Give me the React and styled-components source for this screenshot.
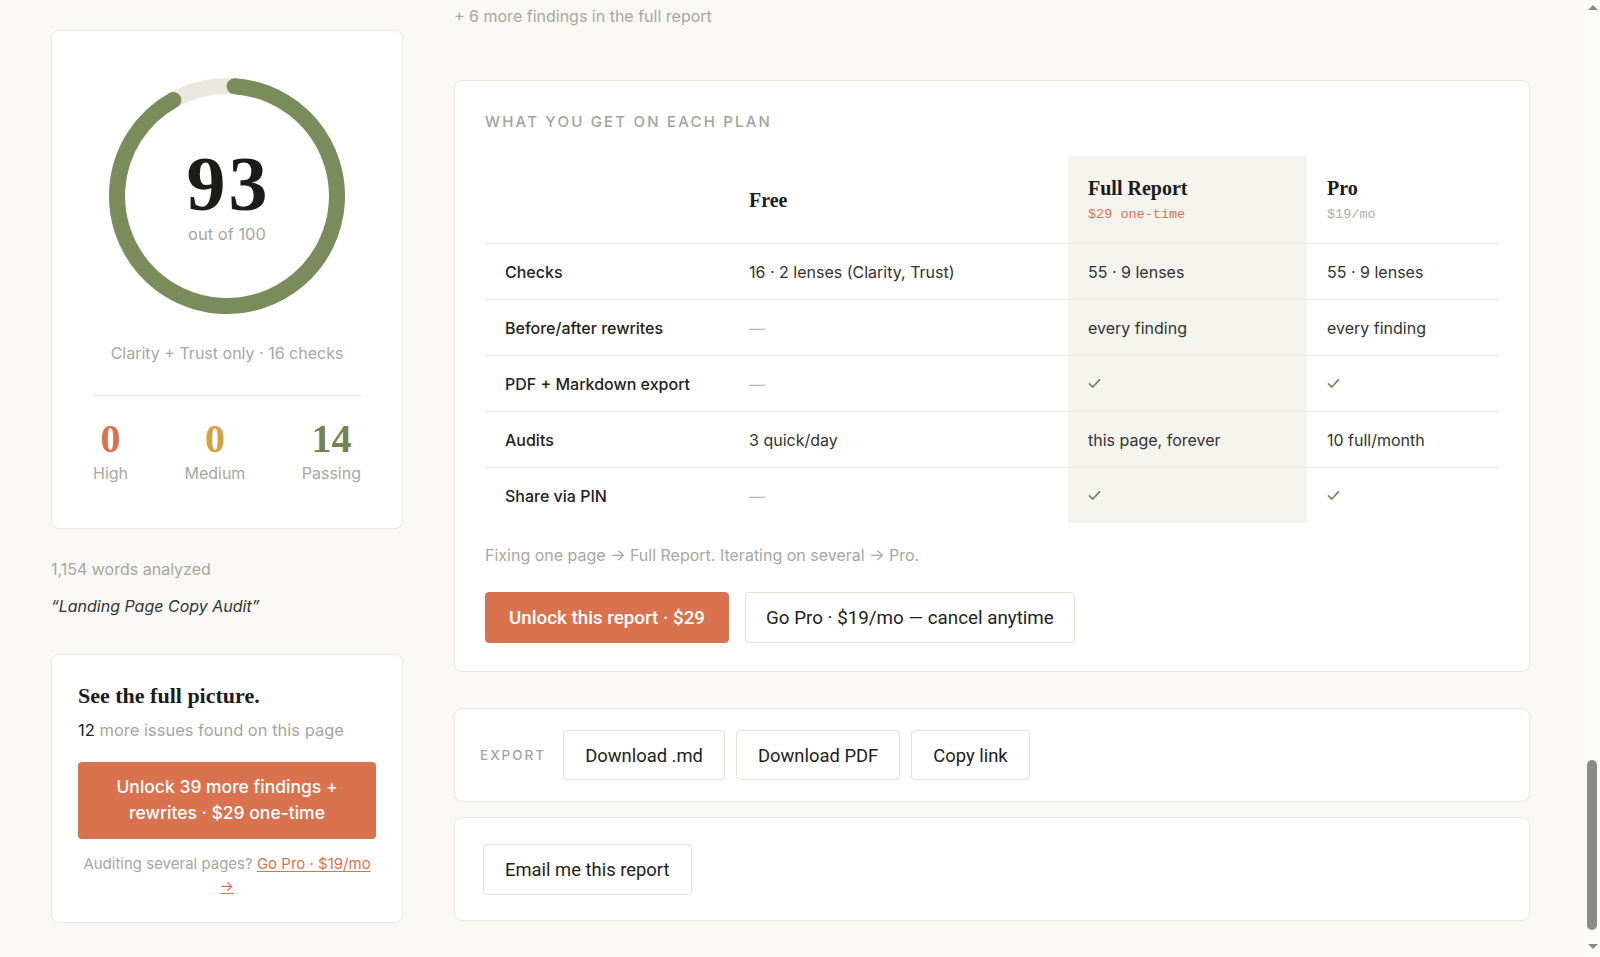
import React from 'react';
import styled, { createGlobalStyle } from 'styled-components';

const GlobalStyle = createGlobalStyle`
    body {
        margin: 0;
        background: #f9f8f4;
        font-family: Inter, "Noto Sans", sans-serif;
        color: #222;
    }
`;

const Page = styled.div`
    display: grid;
    grid-template-columns: 352px 1fr;
    column-gap: 51px;
    padding: 5px 70px 34px 51px;
    align-items: start;
`;

const Sidebar = styled.aside`
    display: flex;
    flex-direction: column;
    padding-top: 25px;
`;

const Main = styled.main`
    display: flex;
    flex-direction: column;
`;

const Card = styled.div`
    background: #fff;
    border: 1px solid #ebe8e1;
    border-radius: 8px;
`;

const ScoreCard = styled(Card)`
    display: flex;
    flex-direction: column;
    align-items: center;
    padding: 47px 41px 45px;
`;

const Ring = styled.div`
    position: relative;
    width: 236px;
    height: 236px;
`;

const RingLabel = styled.div`
    position: absolute;
    inset: 0;
    display: flex;
    flex-direction: column;
    align-items: center;
    justify-content: center;
    padding-bottom: 4px;
`;

const Score = styled.div`
    font-family: "Liberation Serif", serif;
    font-weight: 700;
    font-size: 78px;
    line-height: 78px;
    color: #1c1b19;
    letter-spacing: 3px;
    margin-right: -3px;
`;

const ScoreSub = styled.div`
    font-size: 16.5px;
    line-height: 20px;
    color: #aaa69f;
    margin-top: 1px;
`;

const Scope = styled.div`
    margin-top: 29px;
    font-size: 16px;
    line-height: 20px;
    color: #aaa69f;
`;

const Divider = styled.hr`
    align-self: stretch;
    border: 0;
    border-top: 1px solid #e8e5de;
    margin: 32px 0 0;
`;

const Stats = styled.div`
    align-self: stretch;
    display: flex;
    justify-content: space-between;
    margin-top: 21px;
`;

const Stat = styled.div`
    display: flex;
    flex-direction: column;
    align-items: center;
`;

const StatValue = styled.div`
    font-family: "Liberation Serif", serif;
    font-weight: 700;
    font-size: 40px;
    line-height: 44px;
    color: ${p => p.$color};
`;

const StatLabel = styled.div`
    margin-top: 2px;
    font-size: 16px;
    line-height: 20px;
    color: #aaa69f;
`;

const Meta = styled.div`
    margin-top: 29px;
    font-size: 16px;
    line-height: 22px;
    color: #aaa69f;
`;

const Title = styled.div`
    margin-top: 15px;
    font-size: 16px;
    line-height: 22px;
    font-style: italic;
    color: #333;
`;

const UpsellCard = styled(Card)`
    margin-top: 37px;
    padding: 28px 26px 25px;
`;

const UpsellHeading = styled.h3`
    margin: 0;
    font-family: "Liberation Serif", serif;
    font-weight: 700;
    font-size: 22px;
    line-height: 26px;
    color: #1c1b19;
`;

const UpsellSub = styled.p`
    margin: 10px 0 0;
    font-size: 16.5px;
    line-height: 22px;
    color: #aaa69f;

    b {
        font-weight: 400;
        color: #222;
    }
`;

const BigButton = styled.button`
    display: block;
    width: 100%;
    margin-top: 21px;
    padding: 12px 16px 13px;
    border: 0;
    border-radius: 4px;
    background: #d9734f;
    color: #fff;
    font-family: Inter, sans-serif;
    font-size: 17.5px;
    font-weight: 500;
    line-height: 26px;
`;

const Note = styled.p`
    margin: 14px 0 0;
    text-align: center;
    font-size: 15px;
    line-height: 22px;
    color: #aaa69f;

    a {
        color: #d9734f;
        text-decoration: underline;
        text-underline-offset: 2px;
    }
`;

const MoreFindings = styled.div`
    font-size: 16px;
    line-height: 22px;
    color: #aaa69f;
`;

const PlanCard = styled(Card)`
    margin-top: 53px;
    padding: 31px 30px 28px;
`;

const Eyebrow = styled.div`
    font-size: 15px;
    line-height: 20px;
    letter-spacing: 2.2px;
    color: #a5a29b;
    text-transform: uppercase;
    font-weight: 500;
`;

const Table = styled.div`
    display: grid;
    grid-template-columns: 244px 339px 239px 1fr;
    margin-top: 24px;
`;

const Cell = styled.div`
    display: flex;
    flex-direction: column;
    justify-content: center;
    padding: 0 20px;
    height: ${p => (p.$head ? '87px' : '56px')};
    box-sizing: border-box;
    border-top: ${p => (p.$head ? '0' : '1px solid #ebe9e3')};
    background: ${p => (p.$hl ? '#f4f3ee' : 'transparent')};
    font-size: 16px;
    color: ${p => (p.$label ? '#222' : '#333')};
    font-weight: ${p => (p.$label ? 500 : 400)};
`;

const PlanName = styled.div`
    font-family: "Liberation Serif", serif;
    font-weight: 700;
    font-size: 20px;
    line-height: 24px;
    color: #1c1b19;
`;

const PlanPrice = styled.div`
    margin-top: 6px;
    font-family: "Liberation Mono", monospace;
    font-size: 13.5px;
    line-height: 18px;
    color: ${p => (p.$accent ? '#d9734f' : '#b0ada6')};
`;

const Dash = styled.span`
    color: #bdbab3;
`;

const Hint = styled.p`
    margin: 21px 0 0;
    font-size: 16px;
    line-height: 22px;
    color: #aaa69f;
`;

const Actions = styled.div`
    display: flex;
    gap: 16px;
    margin-top: 26px;
`;

const Button = styled.button`
    height: ${p => p.$h || 50}px;
    padding: 0 ${p => p.$px || 21}px;
    border-radius: 4px;
    border: 1px solid ${p => (p.$primary ? '#d9734f' : '#e4e1da')};
    background: ${p => (p.$primary ? '#d9734f' : '#fff')};
    color: ${p => (p.$primary ? '#fff' : '#222')};
    font-family: Roboto, sans-serif;
    font-size: ${p => p.$size || 18.4}px;
    font-weight: ${p => (p.$primary ? 500 : 400)};
    white-space: nowrap;
`;

const ExportCard = styled(Card)`
    margin-top: 36px;
    display: flex;
    align-items: center;
    gap: 11px;
    padding: 21px 25px 21px;
`;

const ExportLabel = styled.span`
    font-size: 13.5px;
    letter-spacing: 2px;
    color: #a5a29b;
    font-weight: 500;
    margin-right: 6px;
`;

const EmailCard = styled(Card)`
    margin-top: 15px;
    padding: 26px 28px 25px;
    display: flex;
`;

/* browser scrollbar as seen in the capture */
const Scrollbar = styled.div`
    position: fixed;
    top: 0;
    right: 0;
    width: 15px;
    height: 100vh;
    background: #fafaf9;
`;

const ScrollThumb = styled.div`
    position: absolute;
    right: 3px;
    top: 760px;
    width: 10px;
    height: 170px;
    border-radius: 5px;
    background: #8b8b8b;
`;

const ScrollArrow = styled.div`
    position: absolute;
    left: 3px;
    width: 0;
    height: 0;
    border-left: 5px solid transparent;
    border-right: 5px solid transparent;
    ${p => (p.$up
        ? 'top: 5px; border-bottom: 5px solid #8b8b8b;'
        : 'bottom: 8px; border-top: 5px solid #8b8b8b;')}
`;

const Check = () => (
    <svg width="13" height="11" viewBox="0 0 13 11" fill="none">
        <path d="M1.5 5.8 L4.8 9 L11.5 1.8" stroke="#7a8c5c" strokeWidth="1.8" strokeLinecap="round" strokeLinejoin="round" />
    </svg>
);

const ScoreRing = ({ value }) => {
    const r = 110;
    const c = 2 * Math.PI * r;
    return (
        <Ring>
            <svg width="236" height="236" viewBox="0 0 236 236">
                <circle cx="118" cy="118" r={r} fill="none" stroke="#e9e7df" strokeWidth="16" />
                <circle
                    cx="118" cy="118" r={r} fill="none" stroke="#7a8c5c" strokeWidth="16"
                    strokeLinecap="round"
                    strokeDasharray={`${(c * value) / 100 - 16} ${c}`}
                    transform="rotate(-86 118 118)"
                />
            </svg>
            <RingLabel>
                <Score>{value}</Score>
                <ScoreSub>out of 100</ScoreSub>
            </RingLabel>
        </Ring>
    );
};

const rows = [
    ['Checks', '16 · 2 lenses (Clarity, Trust)', '55 · 9 lenses', '55 · 9 lenses'],
    ['Before/after rewrites', null, 'every finding', 'every finding'],
    ['PDF + Markdown export', null, true, true],
    ['Audits', '3 quick/day', 'this page, forever', '10 full/month'],
    ['Share via PIN', null, true, true],
];

const renderValue = v => {
    if (v === null) return <Dash>—</Dash>;
    if (v === true) return <Check />;
    return v;
};

const App = () => {
    return (
        <>
            <GlobalStyle />
            <Page>
                <Sidebar>
                    <ScoreCard>
                        <ScoreRing value={93} />
                        <Scope>Clarity + Trust only · 16 checks</Scope>
                        <Divider />
                        <Stats>
                            <Stat>
                                <StatValue $color="#d9704f">0</StatValue>
                                <StatLabel>High</StatLabel>
                            </Stat>
                            <Stat>
                                <StatValue $color="#d4a13c">0</StatValue>
                                <StatLabel>Medium</StatLabel>
                            </Stat>
                            <Stat>
                                <StatValue $color="#6f8450">14</StatValue>
                                <StatLabel>Passing</StatLabel>
                            </Stat>
                        </Stats>
                    </ScoreCard>
                    <Meta>1,154 words analyzed</Meta>
                    <Title>“Landing Page Copy Audit”</Title>
                    <UpsellCard>
                        <UpsellHeading>See the full picture.</UpsellHeading>
                        <UpsellSub><b>12</b> more issues found on this page</UpsellSub>
                        <BigButton>Unlock 39 more findings +<br />rewrites · $29 one-time</BigButton>
                        <Note>
                            Auditing several pages? <a href="#pro">Go Pro · $19/mo<br />→</a>
                        </Note>
                    </UpsellCard>
                </Sidebar>

                <Main>
                    <MoreFindings>+ 6 more findings in the full report</MoreFindings>
                    <PlanCard>
                        <Eyebrow>What you get on each plan</Eyebrow>
                        <Table>
                            <Cell $head />
                            <Cell $head><PlanName>Free</PlanName></Cell>
                            <Cell $head $hl>
                                <PlanName>Full Report</PlanName>
                                <PlanPrice $accent>$29 one-time</PlanPrice>
                            </Cell>
                            <Cell $head>
                                <PlanName>Pro</PlanName>
                                <PlanPrice>$19/mo</PlanPrice>
                            </Cell>
                            {rows.map(([label, free, full, pro]) => (
                                <React.Fragment key={label}>
                                    <Cell $label>{label}</Cell>
                                    <Cell>{renderValue(free)}</Cell>
                                    <Cell $hl>{renderValue(full)}</Cell>
                                    <Cell>{renderValue(pro)}</Cell>
                                </React.Fragment>
                            ))}
                        </Table>
                        <Hint>Fixing one page → Full Report. Iterating on several → Pro.</Hint>
                        <Actions>
                            <Button $primary $h={51} $px={23} $size={18.8}>Unlock this report · $29</Button>
                            <Button $h={51} $px={20} $size={18.8}>Go Pro · $19/mo — cancel anytime</Button>
                        </Actions>
                    </PlanCard>

                    <ExportCard>
                        <ExportLabel>EXPORT</ExportLabel>
                        <Button>Download .md</Button>
                        <Button>Download PDF</Button>
                        <Button>Copy link</Button>
                    </ExportCard>

                    <EmailCard>
                        <Button $h={51}>Email me this report</Button>
                    </EmailCard>
                </Main>
            </Page>
            <Scrollbar aria-hidden="true">
                <ScrollArrow $up />
                <ScrollThumb />
                <ScrollArrow />
            </Scrollbar>
        </>
    );
};

export default App;
